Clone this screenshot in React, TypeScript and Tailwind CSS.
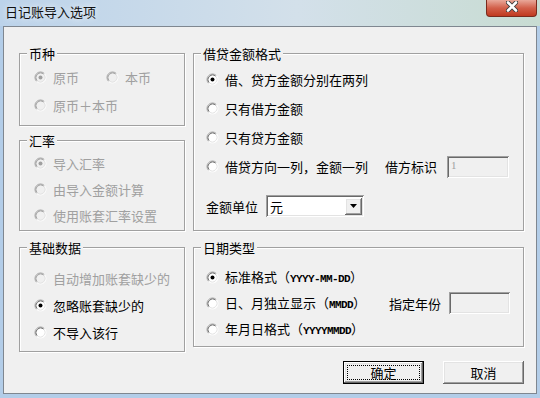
import React from "react";
import clsx from "clsx";

const sunken =
  "shadow-[inset_1px_1px_0_#a0a0a0,inset_-1px_-1px_0_#fff,inset_2px_2px_0_#696969,inset_-2px_-2px_0_#e3e3e3]";
const raised =
  "shadow-[inset_-1px_-1px_0_#696969,inset_1px_1px_0_#fff,inset_-2px_-2px_0_#a0a0a0,inset_2px_2px_0_#e3e3e3]";
const mono = "font-['Liberation_Mono',monospace] text-[11px] font-bold tracking-[-0.6px]";

function Radio({ checked = false, disabled = false }: { checked?: boolean; disabled?: boolean }) {
  return (
    <svg width="13" height="13" viewBox="0 0 13 13" className="shrink-0">
      <circle cx="6.5" cy="6.5" r="5.5" fill={disabled ? "#f0f0f0" : "#fff"} />
      <path d="M2.61 10.39A5.5 5.5 0 0 1 10.39 2.61" stroke="#a0a0a0" fill="none" />
      <path d="M10.39 2.61A5.5 5.5 0 0 1 2.61 10.39" stroke="#fff" fill="none" />
      <path d="M3.32 9.68A4.5 4.5 0 0 1 9.68 3.32" stroke={disabled ? "#a0a0a0" : "#696969"} fill="none" />
      <path d="M9.68 3.32A4.5 4.5 0 0 1 3.32 9.68" stroke="#e3e3e3" fill="none" />
      {checked && <circle cx="6.5" cy="6.5" r="2" fill={disabled ? "#a0a0a0" : "#000"} />}
    </svg>
  );
}

function Option({
  checked,
  disabled,
  className,
  children,
}: {
  checked?: boolean;
  disabled?: boolean;
  className?: string;
  children: React.ReactNode;
}) {
  return (
    <div className={clsx("flex items-center gap-[6px]", disabled ? "text-[#a0a0a0]" : "text-black", className)}>
      <Radio checked={checked} disabled={disabled} />
      <span className="whitespace-nowrap">{children}</span>
    </div>
  );
}

function Group({
  label,
  className,
  children,
}: {
  label: string;
  className?: string;
  children: React.ReactNode;
}) {
  return (
    <div
      className={clsx(
        "relative flex flex-col border border-[#a0a0a0] shadow-[inset_1px_1px_0_#fff,1px_1px_0_#fff]",
        className
      )}
    >
      <span className="absolute -top-[8px] left-[7px] bg-[#f0f0f0] px-[2px] text-[13px] leading-[16px] text-black">
        {label}
      </span>
      {children}
    </div>
  );
}

function TextBox({ value, className }: { value?: string; className?: string }) {
  return (
    <div className={clsx("h-[22px] bg-[#f0f0f0] pl-[4px] pt-[4px]", sunken, className)}>
      <span className="block font-['Liberation_Serif',serif] text-[11px] leading-none text-[#a0a0a0]">{value}</span>
    </div>
  );
}

function Button({ label, primary = false }: { label: string; primary?: boolean }) {
  return (
    <button
      className={clsx(
        "flex h-[23px] w-[81px] items-stretch bg-[#f0f0f0] text-[13px] text-black",
        primary ? "border border-black" : "",
        raised
      )}
    >
      <span
        className={clsx(
          "flex flex-1 items-center justify-center",
          primary ? "m-[3px] border border-dotted border-black" : ""
        )}
      >
        {label}
      </span>
    </button>
  );
}

export default function App() {
  return (
    <div className="flex h-[398px] w-[540px] flex-col bg-[#b3cde8] font-['Noto_Sans_CJK_SC',sans-serif] text-[13px] leading-none">
      {/* title bar */}
      <div className="flex h-[26px] items-start justify-between bg-[linear-gradient(90deg,#bcd3ea,#d3e0ea_55%,#c8dcd2)]">
        <span className="pl-[5px] pt-[5px] text-[13px] text-[#111] [text-shadow:0_0_6px_#fff]">日记账导入选项</span>
        <div className="mr-[3px] flex h-[17px] w-[51px] items-start justify-center rounded-b-[4px] border border-t-0 border-[#7a2a1c] bg-[linear-gradient(180deg,#e9a899,#d2604a_50%,#c0391f)] pt-[1px]">
          <svg width="12" height="11" viewBox="0 0 12 11">
            <path d="M2 1.5L10 9.5M10 1.5L2 9.5" stroke="#3a3a3a" strokeWidth="4.4" strokeLinecap="round" />
            <path d="M2 1.5L10 9.5M10 1.5L2 9.5" stroke="#fff" strokeWidth="2.6" strokeLinecap="round" />
          </svg>
        </div>
      </div>

      {/* client area */}
      <div className="mx-[3px] flex h-[368px] flex-col border border-[#7f8790] bg-[#f0f0f0]">
        <div className="flex gap-[8px] pl-[15px] pt-[26px]">
          {/* left column */}
          <div className="flex w-[166px] flex-col">
            <Group label="币种" className="h-[73px] pl-[14px] pt-[9px]">
              <div className="flex h-[28px] items-center">
                <Option checked disabled className="w-[72px]">原币</Option>
                <Option disabled>本币</Option>
              </div>
              <div className="flex h-[28px] items-center">
                <Option disabled>原币＋本币</Option>
              </div>
            </Group>

            <Group label="汇率" className="mt-[14px] h-[91px] pl-[14px] pt-[9px]">
              <Option checked disabled className="h-[26px]">导入汇率</Option>
              <Option disabled className="h-[26px]">由导入金额计算</Option>
              <Option disabled className="h-[26px]">使用账套汇率设置</Option>
            </Group>

            <Group label="基础数据" className="mt-[16px] h-[105px] pl-[14px] pt-[17px]">
              <Option disabled className="h-[27px]">自动增加账套缺少的</Option>
              <Option checked className="h-[27px]">忽略账套缺少的</Option>
              <Option className="h-[27px]">不导入该行</Option>
            </Group>
          </div>

          {/* right column */}
          <div className="flex w-[331px] flex-col">
            <Group label="借贷金额格式" className="h-[178px] pl-[12px] pt-[11px]">
              <Option checked className="h-[29px]">借、贷方金额分别在两列</Option>
              <Option className="h-[29px]">只有借方金额</Option>
              <Option className="h-[29px]">只有贷方金额</Option>
              <div className="flex h-[29px] items-center">
                <Option>借贷方向一列，金额一列</Option>
                <span className="ml-[17px]">借方标识</span>
                <TextBox value="1" className="ml-[10px] w-[62px]" />
              </div>
              <div className="mt-[14px] flex h-[22px] items-center">
                <span>金额单位</span>
                <div className={clsx("ml-[8px] flex h-[22px] w-[98px] items-center bg-white pl-[4px] pr-[2px]", sunken)}>
                  <span className="flex-1">元</span>
                  <span className={clsx("flex h-[17px] w-[17px] items-center justify-center bg-[#f0f0f0]", raised)}>
                    <svg width="7" height="4" viewBox="0 0 7 4">
                      <path d="M0 0H7L3.5 4Z" fill="#000" />
                    </svg>
                  </span>
                </div>
              </div>
            </Group>

            <Group label="日期类型" className="mt-[16px] h-[100px] pl-[12px] pt-[16px]">
              <Option checked className="h-[26px]">
                标准格式（<span className={mono}>YYYY-MM-DD</span>）
              </Option>
              <div className="flex h-[26px] items-center">
                <Option>
                  日、月独立显示（<span className={mono}>MMDD</span>）
                </Option>
                <span className="ml-[23px]">指定年份</span>
                <TextBox className="ml-[8px] w-[61px]" />
              </div>
              <Option className="h-[26px]">
                年月日格式（<span className={mono}>YYYYMMDD</span>）
              </Option>
            </Group>
          </div>
        </div>

        {/* buttons */}
        <div className="mt-[9px] flex justify-end gap-[19px] pr-[12px]">
          <Button label="确定" primary />
          <Button label="取消" />
        </div>
      </div>
    </div>
  );
}
